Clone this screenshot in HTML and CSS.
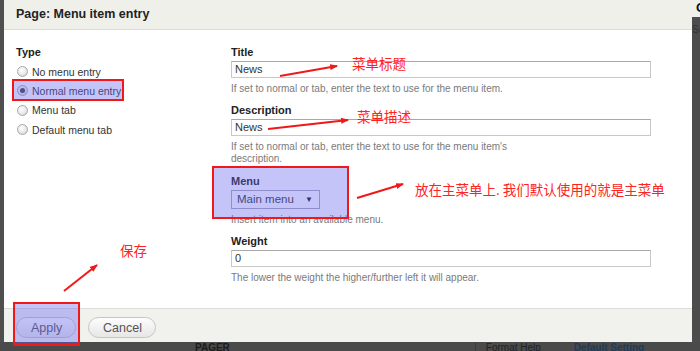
FILE: index.html
```html
<!DOCTYPE html>
<html lang="en">
<head>
  <meta charset="UTF-8">
  <title>Page: Menu item entry</title>
  <link rel="stylesheet" href="styles.css">
</head>
<body>
<div class="screen">
  <div class="side-left"></div>
  <div class="dialog">
    <div class="dialog-title">Page: Menu item entry</div>
    <div class="dialog-body">
      <div class="col-type">
        <div class="label">Type</div>
        <label class="radio"><span class="dot"></span>No menu entry</label>
        <label class="radio"><span class="dot checked"></span>Normal menu entry</label>
        <label class="radio"><span class="dot"></span>Menu tab</label>
        <label class="radio"><span class="dot"></span>Default menu tab</label>
      </div>
      <div class="col-fields">
        <div class="field">
          <div class="label">Title</div>
          <div class="input">News</div>
          <div class="help">If set to normal or tab, enter the text to use for the menu item.</div>
        </div>
        <div class="field">
          <div class="label">Description</div>
          <div class="input">News</div>
          <div class="help narrow">If set to normal or tab, enter the text to use for the menu item's description.</div>
        </div>
        <div class="field">
          <div class="label">Menu</div>
          <div class="select">Main menu <span class="caret">&#9660;</span></div>
          <div class="help">Insert item into an available menu.</div>
        </div>
        <div class="field">
          <div class="label">Weight</div>
          <div class="input">0</div>
          <div class="help">The lower the weight the higher/further left it will appear.</div>
        </div>
      </div>
    </div>
    <div class="dialog-footer">
      <button type="button" class="btn">Apply</button>
      <button type="button" class="btn">Cancel</button>
    </div>
  </div>
  <div class="side-right">
    <div class="side-right-top">C</div>
    <div class="side-right-text">Sa</div>
  </div>
</div>
<div class="below">
  <span class="pager">PAGER</span>
  <span class="below-right">Format Help <b>Default Setting</b></span>
</div>

<!-- annotations drawn over the screenshot -->
<div class="mark mark-type"></div>
<div class="mark mark-menu"></div>
<div class="mark mark-apply"></div>
<div class="note note-title">菜单标题</div>
<div class="note note-desc">菜单描述</div>
<div class="note note-menu">放在主菜单上. 我们默认使用的就是主菜单</div>
<div class="note note-save">保存</div>
<svg class="arrows" width="700" height="351" viewBox="0 0 700 351">
  <defs>
    <marker id="head" markerWidth="8" markerHeight="6" refX="7" refY="3" orient="auto" markerUnits="userSpaceOnUse">
      <path d="M0,0 L8,3 L0,6 Z" fill="#f01818"/>
    </marker>
  </defs>
  <line x1="280" y1="76" x2="337" y2="66" stroke="#f01818" stroke-width="2" marker-end="url(#head)"/>
  <line x1="268" y1="129" x2="348" y2="120" stroke="#f01818" stroke-width="2" marker-end="url(#head)"/>
  <line x1="357" y1="198" x2="403" y2="184" stroke="#f01818" stroke-width="2" marker-end="url(#head)"/>
  <line x1="64" y1="291" x2="97" y2="265" stroke="#f01818" stroke-width="2" marker-end="url(#head)"/>
</svg>
</body>
</html>
```

FILE: styles.css
```css
* { box-sizing: border-box; }
body {
  margin: 0;
  width: 700px;
  height: 351px;
  overflow: hidden;
  position: relative;
  background: #4a4a4a;
  font-family: 'Liberation Sans', Arial, sans-serif;
  color: #333;
}
.screen {
  display: flex;
  height: 342px;
}
.side-left {
  width: 4px;
  background: #4f4f4f;
}
.dialog {
  width: 688px;
  display: flex;
  flex-direction: column;
  background: #fff;
}
.dialog-title {
  height: 30px;
  padding: 0 12px;
  background: #f0f0eb;
  border-bottom: 1px solid #dcdcd8;
  font-size: 12.5px;
  font-weight: bold;
  color: #222;
  line-height: 28px;
}
.dialog-body {
  flex: 1;
  display: flex;
  padding: 16px 12px 0;
}
.col-type {
  width: 215px;
}
.label {
  font-size: 11px;
  font-weight: bold;
  line-height: 13px;
  color: #222;
}
.col-type .label {
  margin-bottom: 3px;
}
.radio {
  display: flex;
  align-items: center;
  height: 19.3px;
  font-size: 10.5px;
  color: #333;
}
.dot {
  width: 11px;
  height: 11px;
  margin: 0 4px 0 1px;
  border-radius: 50%;
  border: 1px solid #a8a8a8;
  background: radial-gradient(circle at 40% 35%, #fff 0, #e6e6e6 60%, #c8c8c8 100%);
  display: flex;
  align-items: center;
  justify-content: center;
}
.dot.checked::after {
  content: "";
  width: 5px;
  height: 5px;
  border-radius: 50%;
  background: #444;
}
.col-fields {
  width: 420px;
}
.field {
  margin-bottom: 9px;
}
.input {
  margin-top: 2px;
  height: 17px;
  border: 1px solid #c8c8c8;
  border-top-color: #a8a8a8;
  padding: 0 3px;
  font-size: 11px;
  line-height: 15px;
  color: #333;
}
.select {
  margin-top: 2px;
  width: 89px;
  height: 19px;
  border: 1px solid #a8a8b8;
  padding: 0 6px 0 5px;
  font-size: 11.5px;
  line-height: 17px;
  color: #333;
  display: flex;
  justify-content: space-between;
}
.caret {
  font-size: 8px;
  color: #111;
}
.help {
  margin-top: 5px;
  font-size: 10px;
  line-height: 12px;
  color: #7a7a7a;
}
.help.narrow {
  width: 290px;
  margin-bottom: 10px;
}
.dialog-footer {
  height: 34px;
  background: #f1f1ed;
  border-top: 1px solid #dcdcd8;
  display: flex;
  gap: 12px;
  padding: 8px 12px 0;
}
.btn {
  height: 21px;
  padding: 0 14px;
  border: 1px solid #c6c6c6;
  border-radius: 11px;
  background: linear-gradient(#fdfdfd, #e6e6e6);
  font-family: 'Liberation Sans', Arial, sans-serif;
  font-size: 12.5px;
  color: #555;
}
.btn:first-child {
  width: 60px;
}
.btn + .btn {
  width: 68px;
}
.side-right {
  flex: 1;
  background: #4c4c4c;
  overflow: hidden;
}
.side-right-top {
  height: 17px;
  background: #efefeb;
  font-size: 13px;
  font-weight: bold;
  color: #111;
  padding-left: 4px;
}
.side-right-text {
  padding-top: 7px;
  font-size: 10px;
  color: #333;
}
.below {
  height: 9px;
  display: flex;
  font-size: 10px;
  font-weight: bold;
  line-height: 12px;
  color: #1c1c1c;
}
.pager {
  margin-left: 195px;
}
.below-right {
  margin-left: 245px;
  padding-left: 10px;
  border-left: 1px solid #3c3c3c;
  font-weight: normal;
  color: #222;
}
.below-right b {
  color: #1c3c5c;
  margin-left: 30px;
}

/* overlays */
.mark {
  position: absolute;
  border: 2px solid #f01818;
  background: rgba(100, 100, 240, 0.38);
}
.mark-type { left: 12px; top: 79px; width: 112px; height: 22px; }
.mark-menu { left: 212px; top: 166px; width: 137px; height: 53px; }
.mark-apply { left: 13px; top: 302px; width: 67px; height: 44px; }
.note {
  position: absolute;
  font-family: 'Noto Sans CJK SC', sans-serif;
  font-size: 13.5px;
  line-height: 16px;
  color: #f22;
  white-space: nowrap;
}
.note-title { left: 352px; top: 55px; }
.note-desc { left: 357px; top: 108px; }
.note-menu { left: 415px; top: 181px; }
.note-save { left: 120px; top: 242px; }
.arrows {
  position: absolute;
  left: 0;
  top: 0;
}
```
